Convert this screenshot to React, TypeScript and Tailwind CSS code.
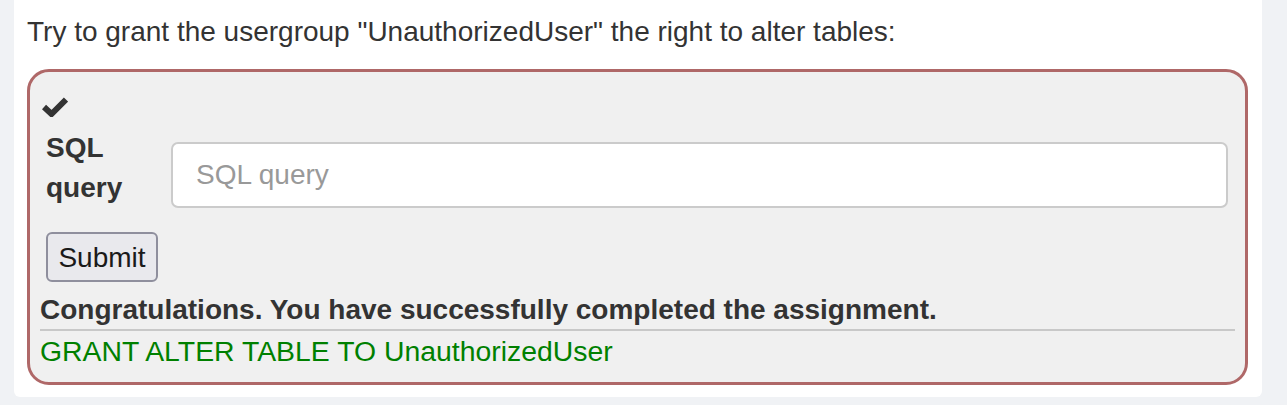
export default function App() {
  return (
    <div className="min-h-[405px] w-full bg-[#f0f2f5] pl-[14px] pr-[25px] font-['Liberation_Sans',Arial,sans-serif] text-[#333]">
      <div className="h-[397px] rounded-b-[6px] bg-white pl-[13px] pr-[14px] pt-[12px]">
        <p className="text-[28px] leading-[40px]">
          Try to grant the usergroup "UnauthorizedUser" the right to alter tables:
        </p>
        <div className="mt-[17px] rounded-[22px] border-[3px] border-[#af6868] bg-[#f0f0f0] px-[10px] pb-[10px] pt-[14px]">
          <div className="flex h-[40px] items-center pl-[2px]">
            <svg width="26" height="21" viewBox="0 0 26 21" className="text-[#333]">
              <path d="M2 11 L9.5 18 L24 3.5" fill="none" stroke="currentColor" strokeWidth="6" strokeLinejoin="miter" />
            </svg>
          </div>
          <div className="mt-[2px] flex pl-[6px] pr-[7px]">
            <label className="w-[125px] shrink-0 text-[28px] font-bold leading-[40px] text-[#333]">
              SQL
              <br />
              query
            </label>
            <input
              type="text"
              placeholder="SQL query"
              className="mt-[14px] h-[66px] flex-1 rounded-[7px] border-2 border-[#cbcbcb] bg-white px-[23px] text-[28px] text-[#555] placeholder:text-[#999] outline-none"
            />
          </div>
          <div className="mt-[24px] pl-[6px]">
            <button className="h-[50px] w-[112px] rounded-[6px] border-2 border-[#8f8f9d] bg-[#e9e9ed] pt-[2px] text-[28px] leading-none text-[#1a1a1a]">
              Submit
            </button>
          </div>
          <div className="mt-[8px] border-b-2 border-[#c8c8c8] text-[28px] font-bold leading-[39px] text-[#333]">
            Congratulations. You have successfully completed the assignment.
          </div>
          <div className="text-[28.4px] leading-[41px] text-[#008000]">GRANT ALTER TABLE TO UnauthorizedUser</div>
        </div>
      </div>
    </div>
  );
}
